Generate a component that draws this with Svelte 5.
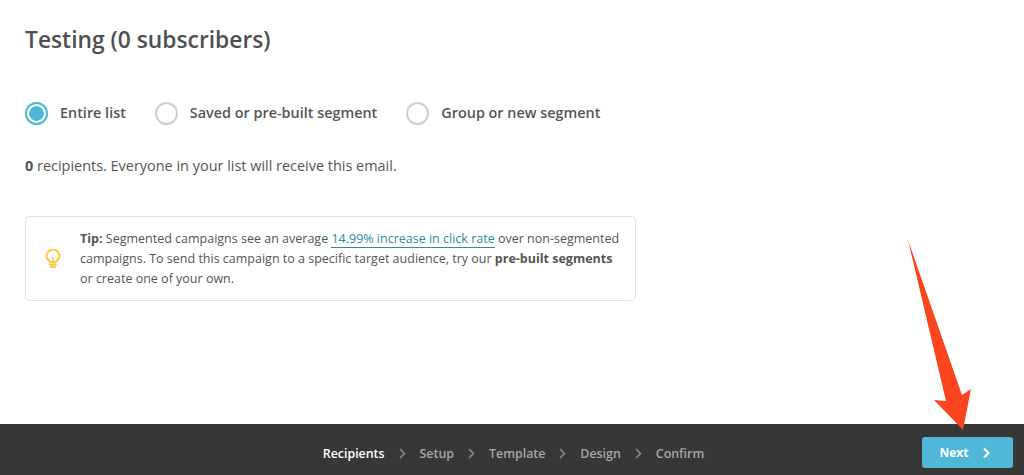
<script>
  const options = [
    { label: 'Entire list', checked: true },
    { label: 'Saved or pre-built segment', checked: false },
    { label: 'Group or new segment', checked: false }
  ];
  const steps = ['Recipients', 'Setup', 'Template', 'Design', 'Confirm'];
</script>

<div class="page">
  <main class="content">
    <h1>Testing (0 subscribers)</h1>
    <div class="options">
      {#each options as o}
        <label class="option">
          <span class="radio" class:checked={o.checked}></span>
          <span>{o.label}</span>
        </label>
      {/each}
    </div>
    <p class="count"><b>0</b> recipients. Everyone in your list will receive this email.</p>
    <div class="tip">
      <svg class="bulb" width="16" height="20" viewBox="0 0 16 20" fill="none">
        <path d="M5 13.2C5 11.8 1.5 10.6 1.5 7A6.5 6.5 0 0 1 14.5 7C14.5 10.6 11 11.8 11 13.2Z" stroke="#fdc94f" stroke-width="2.2" stroke-linejoin="round"/>
        <path d="M8 8V13" stroke="#fdc94f" stroke-width="1.6"/>
        <path d="M5 15.6H11M6 18H10" stroke="#fdc94f" stroke-width="2.2" stroke-linecap="round"/>
      </svg>
      <p><b>Tip:</b> Segmented campaigns see an average <a href="#top">14.99% increase in click rate</a> over non-segmented campaigns. To send this campaign to a specific target audience, try our <b>pre-built segments</b> or create one of your own.</p>
    </div>
  </main>
  <footer class="bar">
    <nav class="steps">
      {#each steps as s, i}
        {#if i > 0}
          <svg class="sep" width="7" height="11" viewBox="0 0 7 11" fill="none"><path d="M1 1L5.5 5.5L1 10" stroke="#8a8a8a" stroke-width="1.6"/></svg>
        {/if}
        <span class="step" class:active={i === 0}>{s}</span>
      {/each}
    </nav>
    <button class="next">Next
      <svg width="9" height="12" viewBox="0 0 9 12" fill="none"><path d="M2 1.5L6.5 6L2 10.5" stroke="#fff" stroke-width="2.2"/></svg>
    </button>
  </footer>
  <svg class="arrow" width="1024" height="475" viewBox="0 0 1024 475">
    <polygon points="908,240 962,395 971,389 963,430 934,400 946,401" fill="#fb4520"/>
  </svg>
</div>

<style>
  :global(body) { margin: 0; background: #fff; }
  .page {
    position: relative;
    width: 1024px;
    height: 475px;
    display: flex;
    flex-direction: column;
    overflow: hidden;
    font-family: "Open Sans", sans-serif;
    color: #555;
  }
  .content { flex: 1; padding: 24px 25px 0; }
  h1 {
    margin: 0;
    font-size: 22.8px;
    line-height: 32px;
    font-weight: 600;
    color: #4f4f4f;
  }
  .options { display: flex; gap: 29px; margin-top: 45px; }
  .option {
    display: flex;
    align-items: center;
    gap: 12px;
    font-size: 14.4px;
    line-height: 24px;
    font-weight: 600;
    color: #555;
  }
  .radio {
    box-sizing: border-box;
    width: 23px;
    height: 23px;
    border-radius: 50%;
    border: 2px solid #cfcfcf;
    background: #fff;
    display: block;
  }
  .radio.checked {
    border-color: #4fb8d6;
    background: radial-gradient(circle, #4fb8d6 0 7px, #fff 7.5px);
  }
  .count { margin: 29px 0 0; font-size: 14.45px; line-height: 24px; color: #555; }
  .count b { font-weight: 700; }
  .tip {
    box-sizing: border-box;
    width: 611px;
    height: 85px;
    margin-top: 38px;
    border: 1px solid #e2e2e2;
    border-radius: 5px;
    display: flex;
    align-items: center;
    padding: 0 14px 0 19px;
    gap: 19px;
  }
  .bulb { flex: none; }
  .tip p { margin: 0; font-size: 12.5px; line-height: 20px; color: #555; }
  .tip b { font-weight: 700; }
  .tip a { color: #2f8ba3; text-decoration: none; border-bottom: 1px solid #2f8ba3; }
  .bar {
    position: relative;
    height: 51px;
    flex: none;
    background: #373737;
    display: flex;
    align-items: center;
    justify-content: center;
  }
  .steps {
    display: flex;
    align-items: center;
    gap: 14px;
    font-size: 12.4px;
    font-weight: 600;
    color: #a6a6a6;
    margin-left: 3px;
    margin-top: 7px;
  }
  .step.active { color: #fff; }
  .next {
    position: absolute;
    left: 922px;
    top: 13px;
    width: 91px;
    height: 31px;
    border: none;
    border-radius: 3px;
    background: #4fb8d6;
    color: #fff;
    font-family: inherit;
    font-size: 12px;
    font-weight: 700;
    display: flex;
    align-items: center;
    justify-content: center;
    gap: 13px;
    padding: 0 5px 0 0;
  }
  .arrow { position: absolute; left: 0; top: 0; pointer-events: none; }
</style>
